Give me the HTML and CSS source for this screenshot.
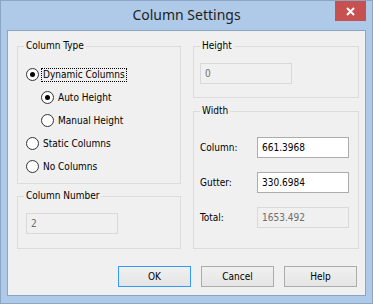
FILE: index.html
```html
<!DOCTYPE html>
<html>
<head>
    <title>Column Settings</title>
    <link rel="stylesheet" href="styles.css">
</head>
<body>
    <div class="window">
        <div class="titlebar">
            <div class="title">Column Settings</div>
            <button class="close">
                <svg width="9" height="9" viewBox="0 0 9 9">
                    <path d="M1 1 L8 8 M8 1 L1 8" stroke="#fff" stroke-width="2" fill="none"/>
                </svg>
            </button>
        </div>
        <div class="client">
            <div class="columns">
                <div class="col">
                    <div class="group group-type">
                        <div class="legend">Column Type</div>
                        <div class="radios">
                            <label class="radio checked"><span class="dot"></span><span class="text focus">Dynamic Columns</span></label>
                            <label class="radio sub checked"><span class="dot"></span><span class="text">Auto Height</span></label>
                            <label class="radio sub"><span class="dot"></span><span class="text">Manual Height</span></label>
                            <label class="radio"><span class="dot"></span><span class="text">Static Columns</span></label>
                            <label class="radio"><span class="dot"></span><span class="text">No Columns</span></label>
                        </div>
                    </div>
                    <div class="group group-number">
                        <div class="legend">Column Number</div>
                        <input class="field" type="text" value="2" disabled>
                    </div>
                </div>
                <div class="col">
                    <div class="group group-height">
                        <div class="legend">Height</div>
                        <input class="field" type="text" value="0" disabled>
                    </div>
                    <div class="group group-width">
                        <div class="legend">Width</div>
                        <div class="rows">
                            <div class="row">
                                <span class="row-label">Column:</span>
                                <input class="field" type="text" value="661.3968">
                            </div>
                            <div class="row">
                                <span class="row-label">Gutter:</span>
                                <input class="field" type="text" value="330.6984">
                            </div>
                            <div class="row">
                                <span class="row-label">Total:</span>
                                <input class="field" type="text" value="1653.492" disabled>
                            </div>
                        </div>
                    </div>
                </div>
            </div>
            <div class="buttons">
                <button class="btn default">OK</button>
                <button class="btn">Cancel</button>
                <button class="btn">Help</button>
            </div>
        </div>
    </div>
</body>
</html>
```

FILE: styles.css
```css
body {
    margin: 0;
    font-family: "DejaVu Sans Condensed", "DejaVu Sans", sans-serif;
    font-size: 10px;
    color: #000;
}
.window {
    width: 373px;
    height: 304px;
    box-sizing: border-box;
    border: 1px solid #8aa5c6;
    background: #aecae8;
}
.titlebar {
    height: 29px;
    display: grid;
    grid-template-columns: 1fr auto 1fr;
}
.title {
    grid-column: 2;
    font-family: "Noto Sans", sans-serif;
    font-size: 14px;
    line-height: 19px;
    padding-top: 4px;
    color: #1e1e1e;
    white-space: nowrap;
}
.close {
    grid-column: 3;
    justify-self: end;
    width: 31px;
    height: 20px;
    margin-right: 6px;
    padding: 0;
    border: none;
    background: #c75050;
    display: flex;
    align-items: center;
    justify-content: center;
}
.client {
    margin: 0 6px;
    height: 266px;
    box-sizing: border-box;
    border: 1px solid #8ba4c2;
    background: #f0f0f0;
}
.columns {
    display: grid;
    grid-template-columns: 164px 166px;
    column-gap: 12px;
    padding: 15px 6px 0 9px;
}
.group {
    border: 1px solid #dcdcdc;
}
.group-number {
    margin-top: 12px;
}
.group-width {
    margin-top: 13px;
}
.legend {
    margin: -8px 0 0 6px;
    width: fit-content;
    height: 13px;
    line-height: 13px;
    padding: 0 2px;
    background: #f0f0f0;
}
.radios {
    padding: 11px 0 5px 8px;
}
.radio {
    display: flex;
    align-items: center;
    height: 23px;
}
.radio.sub {
    padding-left: 15px;
}
.dot {
    flex: none;
    width: 13px;
    height: 13px;
    box-sizing: border-box;
    border: 1px solid #333;
    border-radius: 50%;
    background: #fff;
    margin-right: 2px;
}
.radio.checked .dot::after {
    content: "";
    display: block;
    width: 5px;
    height: 5px;
    margin: 3px;
    border-radius: 50%;
    background: #000;
}
.text {
    line-height: 12px;
    padding: 0 1px;
    border: 1px dotted transparent;
}
.text.focus {
    border-color: #000;
}
.field {
    display: block;
    width: 92px;
    height: 21px;
    box-sizing: border-box;
    margin: 0;
    padding: 0 4px;
    border: 1px solid #acacac;
    background: #fff;
    font-family: inherit;
    font-size: inherit;
    color: #000;
    outline: none;
}
.field:disabled {
    border-color: #d9d9d9;
    background: #f0f0f0;
    color: #6d6d6d;
}
.group-number .field {
    margin: 11px 0 14px 8px;
}
.group-height .field {
    margin: 11px 0 13px 6px;
}
.rows {
    display: flex;
    flex-direction: column;
    gap: 14px;
    padding: 20px 0 20px 6px;
}
.row {
    display: flex;
    align-items: center;
}
.row-label {
    width: 57px;
}
.buttons {
    display: flex;
    justify-content: flex-end;
    gap: 10px;
    margin-top: 17px;
    padding-right: 8px;
}
.btn {
    width: 73px;
    height: 21px;
    padding: 0;
    border: 1px solid #acacac;
    background: linear-gradient(#f0f0f0, #e5e5e5);
    font-family: inherit;
    font-size: inherit;
    color: #000;
}
.btn.default {
    border-color: #3399ff;
}
```
